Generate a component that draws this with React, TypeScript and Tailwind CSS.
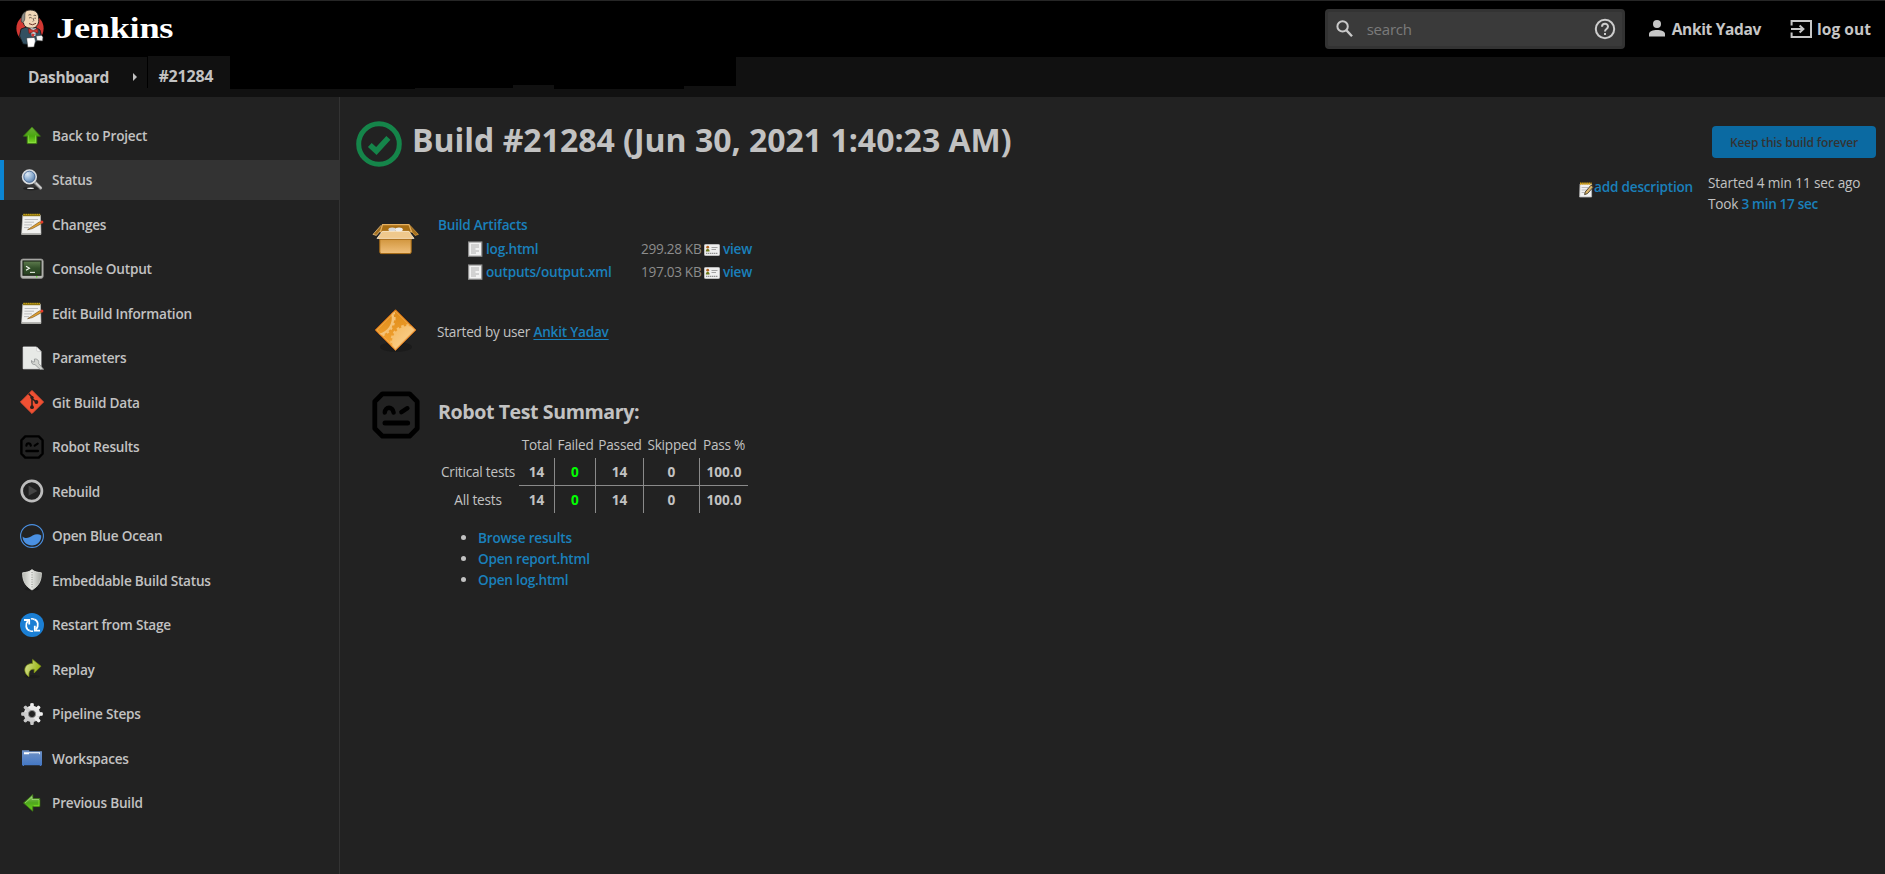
import React from 'react';

const LINK = 'font-[650] text-[#1a80bb]';

function JenkinsLogo() {
  return (
    <svg width="28" height="40" viewBox="0 0 28 40">
      <ellipse cx="14" cy="19.5" rx="13.6" ry="14" fill="#d33833" />
      <path d="M5 20 L9 18.5 L20 18.5 L24 21 L25.5 27 L20 33 L18 36 L7 35 L3.5 27 Z" fill="#335061" stroke="#0d1417" strokeWidth="0.8" />
      <path d="M6.5 9 C6.5 3.5 10 1 14.5 1 C20 1 22.6 4.5 22.6 9 C23.4 13.5 21.5 18.5 16.5 19.2 C11 19.5 8 17.5 7.5 14 C6 13.5 5.5 10.5 6.5 9 Z" fill="#f0d6b7" stroke="#1b1b1b" strokeWidth="0.9" />
      <path d="M5.4 13 C4.6 8 6.6 4 9.5 2.6 C8.4 5.5 9.2 8 8.6 11 L7.2 13.4 Z" fill="#8b8b86" stroke="#222" strokeWidth="0.5" />
      <path d="M12.4 6.2 Q14 5 15.3 6.2 M17.6 6.5 Q19 5.8 20.2 6.8 M13 9 Q14.4 8 15.8 9 M18.4 9.2 L20 9.2 M17 9 Q18.6 12.4 16.8 12.6" fill="none" stroke="#3a2f26" strokeWidth="0.7" />
      <path d="M13 14.6 Q16.4 17 20 14.4" fill="none" stroke="#6d3128" strokeWidth="1" />
      <path d="M14.5 19 L17.5 19.6 L20 19.2 L19.4 27 L15.8 27 Z" fill="#c9d3d8" />
      <path d="M12.4 19.4 L17.3 21.4 L21.8 19.6 L22 24 L17.6 22.6 L13 24.4 Z" fill="#d33833" stroke="#6e1512" strokeWidth="0.6" />
      <path d="M15.8 24.6 L18.8 25 L17.4 28 L15.4 27 Z" fill="#d33833" />
      <path d="M20 27 L25.5 26.2 L27 28 L26.6 32 L21 31.6 Z" fill="#f4f4f4" stroke="#3c3c3c" strokeWidth="0.6" />
      <path d="M10.6 29 L18.6 28.4 L19.4 32 L18 38 L11.8 38.2 Z" fill="#fff" stroke="#2b2b2b" strokeWidth="0.5" />
    </svg>
  );
}

const box = { width: 24, height: 24, viewBox: '0 0 24 24' };

function UpArrow() {
  return (
    <svg {...box}>
      <defs>
        <linearGradient id="up" x1="0" y1="0" x2="0" y2="1">
          <stop offset="0" stopColor="#6cab3a" />
          <stop offset="0.55" stopColor="#4aa80f" />
          <stop offset="1" stopColor="#7fdc2a" />
        </linearGradient>
      </defs>
      <path d="M12 3 L20.4 12.2 H16.8 V19.6 H7.2 V12.2 H3.4 Z" fill="url(#up)" stroke="#3c7a12" strokeWidth="0.8" />
      <path d="M8.4 18.6 V11.4 M15.6 11.4 V18.6 H8.4" fill="none" stroke="#9be552" strokeWidth="0.7" opacity="0.8" />
    </svg>
  );
}

function LeftArrow() {
  return (
    <svg {...box}>
      <defs>
        <linearGradient id="lf" x1="0" y1="0" x2="0" y2="1">
          <stop offset="0" stopColor="#8cc06a" />
          <stop offset="0.5" stopColor="#4fa81c" />
          <stop offset="1" stopColor="#6ed61a" />
        </linearGradient>
      </defs>
      <path d="M3.5 12 L12.8 3.6 V7.6 H19.8 V15.6 H12.8 V20.2 Z" fill="url(#lf)" stroke="#3c7a12" strokeWidth="0.8" />
      <path d="M5 12 L12 5.8 V8.5 H19" fill="none" stroke="#b5e28e" strokeWidth="0.6" />
      <path d="M13.6 14.8 H19 V9" fill="none" stroke="#86e62c" strokeWidth="0.8" />
    </svg>
  );
}

function Magnifier() {
  return (
    <svg {...box}>
      <defs>
        <radialGradient id="mg" cx="0.35" cy="0.3" r="0.8">
          <stop offset="0" stopColor="#dfeaf5" />
          <stop offset="0.5" stopColor="#8fb0d3" />
          <stop offset="1" stopColor="#42648f" />
        </radialGradient>
      </defs>
      <ellipse cx="11" cy="20.6" rx="8" ry="1.8" fill="#1d1d1d" opacity="0.7" />
      <ellipse cx="10.5" cy="20.2" rx="3.6" ry="0.8" fill="#e8e8e8" />
      <path d="M14.5 14 L20.6 20" stroke="#8a8a8a" strokeWidth="3.2" strokeLinecap="round" />
      <path d="M16.2 15.2 L21 20" stroke="#d6d6d6" strokeWidth="1.6" strokeLinecap="round" />
      <circle cx="9.4" cy="8.8" r="6.7" fill="url(#mg)" stroke="#d9dcdf" strokeWidth="1.9" />
      <circle cx="9.4" cy="8.8" r="5.6" fill="none" stroke="#35598a" strokeWidth="0.7" />
    </svg>
  );
}

function Notepad() {
  return (
    <svg {...box}>
      <path d="M2.8 3.2 H20.4 L21 22.4 H1.6 Z" fill="#f1f1ef" stroke="#cfcfcb" strokeWidth="0.6" />
      <path d="M1.8 21.2 H21 V22.8 H1.8 Z" fill="#a9a9a5" />
      <path d="M3 1.8 H20.2 V4.2 H3 Z" fill="#8e7510" />
      <path d="M3.6 2.4 H20" stroke="#c9a51f" strokeWidth="1" strokeDasharray="1.2 1" />
      <path d="M4.6 7.5 H18 M4.4 10.2 H14 M4.2 12.9 H12 M4 15.6 H9" stroke="#bcbcbc" strokeWidth="1" />
      <path d="M9.5 16.4 L19.5 9.8 L21.8 11.4 L12.4 16.6 L7.6 17.7 Z" fill="#e0a030" stroke="#6d4a16" strokeWidth="0.6" />
      <circle cx="21.9" cy="10" r="1.5" fill="#e23b2c" />
    </svg>
  );
}

function Terminal() {
  return (
    <svg {...box}>
      <defs>
        <linearGradient id="tm" x1="0" y1="0" x2="0" y2="1">
          <stop offset="0" stopColor="#5f7d4f" />
          <stop offset="0.5" stopColor="#33502a" />
          <stop offset="1" stopColor="#274021" />
        </linearGradient>
      </defs>
      <rect x="0.8" y="2" width="22.4" height="19.4" rx="2.2" fill="#b9bab6" stroke="#8b8c88" strokeWidth="0.8" />
      <rect x="3" y="4" width="18" height="14.2" fill="url(#tm)" stroke="#1c2418" strokeWidth="1.2" />
      <path d="M6 9.2 L9.4 11.2 L6 13.2" fill="none" stroke="#f1f5ee" strokeWidth="1.2" />
      <path d="M10 15.4 H15" stroke="#e1e7dc" strokeWidth="1.1" />
      <rect x="16" y="19.2" width="1.4" height="1.2" fill="#5ee32c" />
    </svg>
  );
}

function ParamPage() {
  return (
    <svg {...box}>
      <path d="M3.2 1 H16.5 L21 5.6 V22.8 H3.2 Z" fill="#e7e9e6" stroke="#f7f7f7" strokeWidth="0.8" />
      <path d="M16.5 1 L16.8 5 L21 5.6 Z" fill="#fff" stroke="#b9b9b9" strokeWidth="0.5" />
      <path d="M14.4 13 L14.6 15.8 L12.4 16 L11.6 14.4 C10.8 16.8 12.4 18.8 15 18.6 L20.2 23.4 H23.8 L18.6 17.4 C19.4 14.6 17.2 12.6 14.4 13 Z" fill="#d3d5d1" stroke="#85888a" strokeWidth="0.7" />
    </svg>
  );
}

function GitMark() {
  return (
    <svg {...box}>
      <path d="M12 0.4 L23.6 12 L12 23.6 L0.4 12 Z" fill="#f05033" stroke="#f05033" strokeWidth="0.8" strokeLinejoin="round" />
      <path d="M8.6 3.6 L12 7 V17 M12 8.2 L16 12" stroke="#2a1f1c" strokeWidth="1.5" fill="none" />
      <circle cx="12" cy="7.6" r="1.7" fill="#2a1f1c" />
      <circle cx="12" cy="17.2" r="1.9" fill="#2a1f1c" />
      <circle cx="16.4" cy="12" r="1.9" fill="#2a1f1c" />
    </svg>
  );
}

function Robot({ size }: { size: number }) {
  return (
    <svg width={size} height={size} viewBox="0 0 48 48">
      <path d="M10.5 2.8 H37.5 L45.2 10.5 V37.5 L37.5 45.2 H10.5 L2.8 37.5 V10.5 Z" fill="none" stroke="#000" strokeWidth="4.8" strokeLinejoin="round" />
      <path d="M12.8 21.5 C13 15.2 20.8 15.2 21.6 21.5 M29.4 21.2 L35.4 17.2" fill="none" stroke="#000" strokeWidth="4.4" strokeLinecap="round" />
      <path d="M13 32 H35.6" stroke="#000" strokeWidth="5" strokeLinecap="round" />
    </svg>
  );
}

function Rebuild() {
  return (
    <svg {...box}>
      <circle cx="11.8" cy="12" r="10.1" fill="#202020" stroke="#bdbdbd" strokeWidth="2.7" />
      <path d="M8.6 6.6 L17.4 12 L8.6 16.8 Z" fill="#444" />
    </svg>
  );
}

function BlueOcean() {
  return (
    <svg {...box}>
      <circle cx="12" cy="12" r="11.4" fill="none" stroke="#4a90e2" strokeWidth="1.1" />
      <path d="M2.6 12.6 C6 15.6 9.4 13.4 12.6 11.6 C16 9.8 18.6 9.8 21.2 11.6 C21.8 17 17.4 21.6 12 21.6 C6.8 21.6 2.4 17.6 2.6 12.6 Z" fill="#4a90e2" />
    </svg>
  );
}

function Shield() {
  return (
    <svg {...box}>
      <defs>
        <linearGradient id="sh" x1="0" y1="0" x2="1" y2="0">
          <stop offset="0" stopColor="#b4b6b0" />
          <stop offset="0.45" stopColor="#e9eae6" />
          <stop offset="1" stopColor="#a8aaa4" />
        </linearGradient>
      </defs>
      <ellipse cx="12" cy="21" rx="7.5" ry="1.6" fill="#161616" opacity="0.6" />
      <path d="M12 1.6 C14.6 4 18 4.4 21.4 4.8 C21.6 13 18.2 18.6 12 22 C5.8 18.6 2.4 13 2.6 4.8 C6 4.4 9.4 4 12 1.6 Z" fill="url(#sh)" stroke="#dedfda" strokeWidth="0.8" />
      <path d="M12 4 V20" stroke="#8b8d87" strokeWidth="1" strokeDasharray="1 1.4" />
    </svg>
  );
}

function Restart() {
  return (
    <svg {...box}>
      <circle cx="12" cy="12" r="12" fill="#1b7fd4" />
      <path d="M9.6 17.6 C6 16.4 4.8 11.4 8 7.6 M14.4 6.4 C18 7.6 19.2 12.6 16 16.6" fill="none" stroke="#fff" strokeWidth="1.8" />
      <path d="M4 7 H9.2 V11.4 M20 17.6 H14.8 V12.8" fill="none" stroke="#fff" strokeWidth="1.8" />
      <path d="M11 6 C12 5.6 13 5.8 14.4 6.4 M9.6 17.6 C11 18.4 12 18.4 13 18" fill="none" stroke="#fff" strokeWidth="1.6" />
    </svg>
  );
}

function Replay() {
  return (
    <svg {...box}>
      <defs>
        <linearGradient id="rp" x1="0" y1="0" x2="1" y2="0.3">
          <stop offset="0" stopColor="#dbe49a" />
          <stop offset="1" stopColor="#98b312" />
        </linearGradient>
      </defs>
      <ellipse cx="12" cy="19.6" rx="8" ry="1.6" fill="#191919" opacity="0.7" />
      <path d="M12.6 2.4 L21 9.2 L14.2 16 V12.2 C10.4 12 8.4 14 9 19.6 C2.6 15.6 3.4 6.6 12.6 6.4 Z" fill="url(#rp)" stroke="#7d9410" strokeWidth="0.7" />
    </svg>
  );
}

function Gear() {
  return (
    <svg {...box}>
      <defs>
        <linearGradient id="gr" x1="0" y1="0" x2="0" y2="1">
          <stop offset="0" stopColor="#f4f4f4" />
          <stop offset="1" stopColor="#c4c4c4" />
        </linearGradient>
      </defs>
      <g fill="url(#gr)">
        <circle cx="12" cy="12" r="8.2" />
        {[0, 45, 90, 135].map((a) => (
          <path key={a} d="M10.3 1.6 Q12 0.4 13.7 1.6 L14.3 12 L13.7 22.4 Q12 23.6 10.3 22.4 L9.7 12 Z" transform={`rotate(${a} 12 12)`} />
        ))}
      </g>
      <circle cx="12" cy="12" r="3.6" fill="#222" stroke="#8e8e8e" strokeWidth="0.9" />
    </svg>
  );
}

function Folder() {
  return (
    <svg {...box}>
      <defs>
        <linearGradient id="fd" x1="0" y1="0" x2="0" y2="1">
          <stop offset="0" stopColor="#7193c6" />
          <stop offset="1" stopColor="#4276c4" />
        </linearGradient>
      </defs>
      <path d="M2 4.2 H9.2 V5.2 H22 V19.2 H21.2 V20 H19.8 V19.2 H4 V20 H2.8 V19.2 H2 Z" fill="url(#fd)" />
      <path d="M4 6.2 H20 V8.2 H19.2 V7.2 H9 V8.2 H4 Z" fill="#fff" />
    </svg>
  );
}

const menu = [
  { label: 'Back to Project', icon: <UpArrow /> },
  { label: 'Status', icon: <Magnifier />, active: true },
  { label: 'Changes', icon: <Notepad /> },
  { label: 'Console Output', icon: <Terminal /> },
  { label: 'Edit Build Information', icon: <Notepad /> },
  { label: 'Parameters', icon: <ParamPage /> },
  { label: 'Git Build Data', icon: <GitMark /> },
  { label: 'Robot Results', icon: <Robot size={24} /> },
  { label: 'Rebuild', icon: <Rebuild /> },
  { label: 'Open Blue Ocean', icon: <BlueOcean /> },
  { label: 'Embeddable Build Status', icon: <Shield /> },
  { label: 'Restart from Stage', icon: <Restart /> },
  { label: 'Replay', icon: <Replay /> },
  { label: 'Pipeline Steps', icon: <Gear /> },
  { label: 'Workspaces', icon: <Folder /> },
  { label: 'Previous Build', icon: <LeftArrow /> },
];

function Header() {
  return (
    <header className="flex h-[57px] items-start border-t border-[#262626] bg-black">
      <a className="flex items-start gap-[12px] pl-[16px] pt-[8px]">
        <JenkinsLogo />
        <span className="mt-px origin-left scale-x-[1.21] font-['Liberation_Serif',serif] text-[30px] leading-[36px] font-bold text-white">Jenkins</span>
      </a>
      <div className="mt-[8px] mr-[24px] ml-auto flex h-[40px] w-[300px] items-center rounded-[4px] border-[3px] border-[#333] bg-[#3a3a3a] pr-[6px] pl-[7px]">
        <svg width="20" height="20" viewBox="0 0 20 20" fill="none" stroke="#c9c9c9" strokeWidth="2">
          <circle cx="7.6" cy="7.4" r="5.2" />
          <path d="M11.4 11.2 L17 17.2" strokeWidth="2.4" />
        </svg>
        <span className="ml-[12px] flex-1 text-[15px] leading-5 text-[#7b7b7b]">search</span>
        <svg width="22" height="22" viewBox="0 0 22 22" fill="none" stroke="#cdcdcd" strokeWidth="2">
          <circle cx="11" cy="11" r="9.2" />
          <path d="M8 8.8 C8 4.9 14 4.9 14 8.6 C14 11 11 11 11 13.4" />
          <path d="M11 15 V17" />
        </svg>
      </div>
      <a className="mt-[17px] flex h-[22px] items-center text-[15.5px] font-bold tracking-[-0.34px] text-[#c6c6c6]">
        <svg className="mr-[7px] mb-[2px]" width="16" height="18" viewBox="0 0 16 18" fill="#c6c6c6">
          <circle cx="8" cy="5" r="4" />
          <path d="M0 17.5 V15 C0 12.4 4 11 8 11 C12 11 16 12.4 16 15 V17.5 Z" />
        </svg>
        Ankit Yadav
      </a>
      <a className="mt-[17px] mr-[14px] ml-[29px] flex h-[22px] items-center text-[15.5px] font-bold tracking-[0.06px] text-[#c6c6c6]">
        <svg className="mr-[4px] mb-[1px]" width="23" height="20" viewBox="0 0 23 20" fill="none" stroke="#c6c6c6" strokeWidth="2">
          <path d="M1.6 6.5 V2 H21 V18 H1.6 V13.5" />
          <path d="M1 10 H13 M9.6 6.4 L13.4 10 L9.6 13.6" />
        </svg>
        log out
      </a>
    </header>
  );
}

function Breadcrumbs() {
  return (
    <nav className="flex h-[40px] items-start bg-[#111] font-bold text-[#c2c2c2]">
      <span className="w-[105px] shrink-0 pt-[9px] pl-[28px] text-[15.5px] leading-[22px] tracking-[-0.38px]">Dashboard</span>
      <svg className="mt-[16px] ml-[28px]" width="4" height="8" viewBox="0 0 4 8">
        <path d="M0 0 L4 4 L0 8 Z" fill="#c2c2c2" />
      </svg>
      <span className="ml-[10px] h-[31px] w-px bg-black" />
      <span className="-mt-px h-[32px] w-[82px] bg-[#111] pt-[9px] pl-[10.5px] text-base leading-[22px]">#21284</span>
      <span className="h-[32px] w-[185px] bg-black" />
      <span className="h-[31px] w-[98px] bg-black" />
      <span className="h-[28px] w-[41px] bg-black" />
      <span className="h-[32px] w-[130px] bg-black" />
      <span className="h-[29px] w-[52px] bg-black" />
    </nav>
  );
}

function Sidebar() {
  return (
    <aside className="flex w-[340px] shrink-0 flex-col gap-[4.47px] border-r border-[#333] pt-[18.5px]">
      {menu.map((m) => (
        <a
          key={m.label}
          className={
            m.active
              ? 'flex h-[40px] items-center border-l-4 border-[#0b85d3] bg-[#333] pl-[16px]'
              : 'flex h-[40px] items-center border-l-4 border-transparent pl-[16px]'
          }
        >
          {m.icon}
          <span className="ml-[8px] font-[650]">{m.label}</span>
        </a>
      ))}
    </aside>
  );
}

function PackageBox() {
  return (
    <svg width="48" height="34" viewBox="0 0 48 34">
      <defs>
        <linearGradient id="pk" x1="0" y1="0" x2="0" y2="1">
          <stop offset="0" stopColor="#c98a2c" />
          <stop offset="1" stopColor="#f0c07c" />
        </linearGradient>
      </defs>
      <path d="M9 3.4 L1 12.4 L4.4 13.4 L11 5.4 Z" fill="#a4701f" stroke="#e8c083" strokeWidth="0.8" />
      <path d="M38 3.4 L46.4 12.4 L43 13.4 L36.4 5.4 Z" fill="#a4701f" stroke="#d99a3c" strokeWidth="0.8" />
      <path d="M10.5 2.6 H37 L39.6 10 H8.4 Z" fill="#a86e14" stroke="#e6b160" strokeWidth="1.2" />
      <ellipse cx="20.2" cy="7.6" rx="3.8" ry="2" fill="#d8d8d8" />
      <ellipse cx="27" cy="7.6" rx="3.8" ry="2" fill="#ececec" />
      <rect x="7.8" y="13" width="31.4" height="18.6" rx="1.6" fill="url(#pk)" stroke="#a96c14" strokeWidth="1" />
      <path d="M10.4 9.4 H36.8 L42 16.4 H5 Z" fill="#efc88c" stroke="#fff0d6" strokeWidth="0.8" />
      <path d="M8 17.4 H39" stroke="#9a6012" strokeWidth="1" opacity="0.7" />
    </svg>
  );
}

function OrangeDiamond() {
  return (
    <svg width="48" height="48" viewBox="0 0 48 48">
      <defs>
        <linearGradient id="od" x1="0" y1="0" x2="0" y2="1">
          <stop offset="0" stopColor="#dd8a17" />
          <stop offset="1" stopColor="#f7a737" />
        </linearGradient>
        <linearGradient id="og" x1="0" y1="0" x2="1" y2="1">
          <stop offset="0" stopColor="#f5b95f" />
          <stop offset="1" stopColor="#fde0b0" />
        </linearGradient>
        <clipPath id="oc">
          <path d="M23.5 3.5 L44 24 L23.5 44.5 L3 24 Z" />
        </clipPath>
      </defs>
      <ellipse cx="24" cy="41" rx="16" ry="5" fill="#181818" opacity="0.7" />
      <path d="M23.5 3.5 L44 24 L23.5 44.5 L3 24 Z" fill="url(#od)" />
      <g clipPath="url(#oc)">
        <circle cx="36" cy="36" r="16" fill="url(#og)" />
        <circle cx="36" cy="36" r="16.4" fill="none" stroke="#f6c06f" strokeWidth="2.6" strokeDasharray="2.6 2.4" />
        <circle cx="4" cy="12" r="17" fill="none" stroke="#f4c277" strokeWidth="2.4" />
        <circle cx="4" cy="12" r="18.6" fill="none" stroke="#f4c277" strokeWidth="2" strokeDasharray="2.4 2.6" />
      </g>
      <path d="M23.5 5 L42.5 24 L23.5 43 L4.5 24 Z" fill="none" stroke="#f7b75c" strokeWidth="0.9" />
      <path d="M23.5 3.8 L43.7 24 L23.5 44.2 L3.3 24 Z" fill="none" stroke="#d0660a" strokeWidth="1" />
    </svg>
  );
}

function DocIcon() {
  return (
    <svg width="15" height="16" viewBox="0 0 15 16">
      <rect x="0.6" y="1" width="13.2" height="14.2" fill="#f2f2f2" stroke="#8e8e8e" strokeWidth="1.2" />
      <path d="M3 4 H11 M3 6 H11 M3 8 H7.5 M3 10 H11 M3 12 H8" stroke="#a9a9a9" strokeWidth="0.9" />
    </svg>
  );
}

function CardIcon() {
  return (
    <svg className="mt-[2px]" width="16" height="12" viewBox="0 0 16 12">
      <rect x="0.5" y="0.5" width="15" height="11" rx="0.8" fill="#efefef" stroke="#c9c9c9" strokeWidth="0.8" />
      <circle cx="3.7" cy="3.2" r="1.4" fill="#b0601c" />
      <path d="M1.8 7.4 C1.8 3.9 5.6 3.9 5.6 7.4 Z" fill="#6d7a1c" />
      <path d="M7.5 3.5 H13.5 M7.5 5.5 H12" stroke="#a2a2a2" strokeWidth="1" />
      <path d="M2 9.3 H14" stroke="#8f8f8f" strokeWidth="1.2" strokeDasharray="1.4 0.6" />
    </svg>
  );
}

function SmallNote() {
  return (
    <svg width="15" height="16" viewBox="0 0 15 16">
      <path d="M1 2 H12.6 V15 H0.6 Z" fill="#f1f1f1" stroke="#b5b5b5" strokeWidth="0.8" />
      <path d="M1 1.6 H12.6" stroke="#d9a514" strokeWidth="2.4" strokeDasharray="1.6 0.5" />
      <path d="M2.6 5.5 H9 M2.6 8 H7.4 M2.6 10.5 H5.4" stroke="#b5b5b5" strokeWidth="0.9" />
      <path d="M5.6 12.6 L6.2 10 L12 3.2 L14.4 5 L8.4 11.6 Z" fill="#d9b46a" stroke="#3c3424" strokeWidth="0.9" />
    </svg>
  );
}

const artifacts = [
  { name: 'log.html', size: '299.28 KB' },
  { name: 'outputs/output.xml', size: '197.03 KB' },
];

const results = ['Critical tests', 'All tests'];
const COLS = 'grid grid-cols-[81px_36px_41px_48px_56px_48px] text-center';

export default function App() {
  return (
    <div className="flex min-h-[874px] flex-col bg-[#222] font-['Open_Sans','Noto_Sans',sans-serif] text-[13.6px] leading-[21px] tracking-[-0.22px] text-[#c2c2c2]">
      <Header />
      <Breadcrumbs />
      <div className="flex flex-1">
        <Sidebar />
        <main className="flex flex-1 justify-between">
          <section className="pl-[16px]">
            <div className="flex pt-[24px]">
              <svg width="46" height="46" viewBox="0 0 46 46" fill="none" stroke="#15854a">
                <circle cx="23" cy="23" r="20.3" strokeWidth="5" />
                <path d="M13.8 24 L20.4 30 L32.4 16.8" strokeWidth="5.6" />
              </svg>
              <h1 className="mt-[-3px] ml-[10px] h-[45px] text-[32px] leading-[44px] font-bold tracking-normal">Build #21284 (Jun 30, 2021 1:40:23 AM)</h1>
            </div>

            <div className="mt-[47px] flex">
              <div className="w-[82px] pt-[8px] pl-[16px]">
                <PackageBox />
              </div>
              <div>
                <div className="h-[23px]">
                  <a className={LINK}>Build Artifacts</a>
                </div>
                {artifacts.map((a) => (
                  <div key={a.name} className="flex h-[23px] items-center pl-[30px]">
                    <DocIcon />
                    <a className={`${LINK} mb-px ml-[3px] w-[155px]`}>{a.name}</a>
                    <span className="mr-[2px] mb-px w-[61px] whitespace-nowrap tracking-[-0.3px] text-[#8c8c8c]">{a.size}</span>
                    <CardIcon />
                    <a className={`${LINK} mb-px ml-[3px]`}>view</a>
                  </div>
                ))}
              </div>
            </div>

            <div className="mt-[23px] flex items-center">
              <div className="w-[81px] pl-[16px]">
                <OrangeDiamond />
              </div>
              <p className="pt-[2px]">
                Started by user <a className={`${LINK} underline underline-offset-2`}>Ankit Yadav</a>
              </p>
            </div>

            <div className="mt-[37px] flex">
              <div className="w-[82px] pl-[16px]">
                <Robot size={48} />
              </div>
              <div>
                <h2 className="mt-[7px] text-[19.6px] leading-[28px] font-bold tracking-[-0.42px]">Robot Test Summary:</h2>
                <div className="mt-[4px]">
                  <div className={`${COLS} h-[28px] items-center whitespace-nowrap`}>
                    <span />
                    <span>Total</span>
                    <span>Failed</span>
                    <span>Passed</span>
                    <span>Skipped</span>
                    <span>Pass %</span>
                  </div>
                  {results.map((r, i) => (
                    <div key={r} className={`${COLS} font-bold leading-[27px]`}>
                      <span className="pr-[1px] font-normal">{r}</span>
                      {['14', '0', '14', '0', '100.0'].map((v, j) => (
                        <span
                          key={j}
                          className={[
                            'tracking-normal border-[#8a8a8a]',
                            j < 4 ? 'border-r' : '',
                            i === 0 ? 'border-b' : '',
                            j === 1 ? 'text-[#00ff00]' : '',
                          ].join(' ')}
                        >
                          {v}
                        </span>
                      ))}
                    </div>
                  ))}
                </div>
                <ul className="mt-[14px] list-disc pl-[40px] marker:text-[#c2c2c2]">
                  <li><a className={LINK}>Browse results</a></li>
                  <li><a className={LINK}>Open report.html</a></li>
                  <li><a className={LINK}>Open log.html</a></li>
                </ul>
              </div>
            </div>
          </section>

          <section className="flex flex-col items-end pt-[29px] pr-[9px]">
            <button className="h-[32px] w-[164px] rounded-[4px] bg-[#0b6aa2] text-[12px] font-[650] tracking-[-0.14px] text-[#333]">Keep this build forever</button>
            <div className="mt-[14px] flex">
              <a className={`${LINK} mt-[4px] mr-[15px] flex h-[21px]`}>
                <span className="mt-[6px]"><SmallNote /></span>
                add description
              </a>
              <div className="w-[168px]">
                <p className="tracking-[-0.12px]">Started 4 min 11 sec ago</p>
                <p>
                  Took <a className={`${LINK} tracking-[-0.34px]`}>3 min 17 sec</a>
                </p>
              </div>
            </div>
          </section>
        </main>
      </div>
    </div>
  );
}
